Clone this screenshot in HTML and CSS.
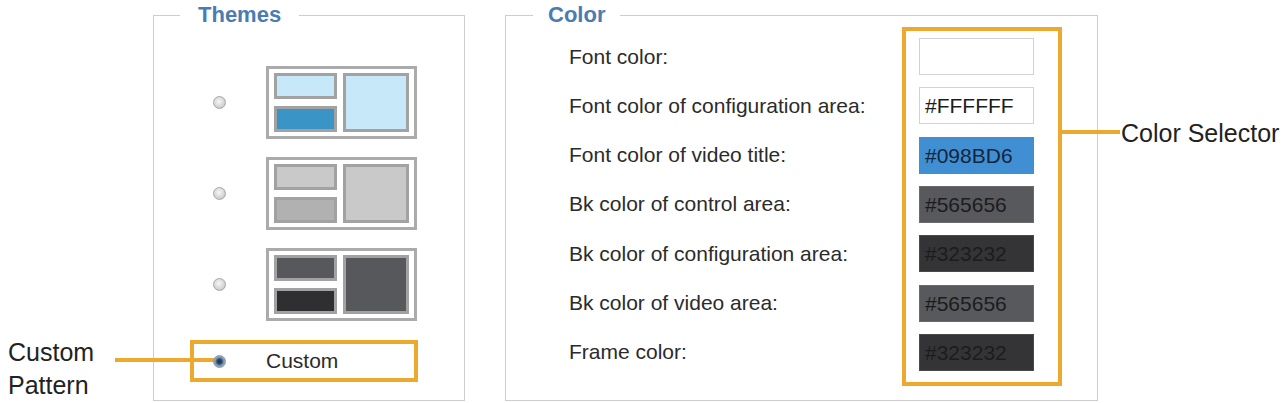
FILE: index.html
```html
<!DOCTYPE html>
<html lang="en">
<head>
    <meta charset="UTF-8">
    <meta name="viewport" content="width=device-width, initial-scale=1.0">
    <title>Themes and Color</title>
    <link rel="stylesheet" href="styles.css">
</head>
<body>
    <div class="page">
        <div class="callout callout-left">Custom<br>Pattern</div>

        <fieldset class="panel themes">
            <legend>Themes</legend>
            <ul class="theme-list">
                <li class="theme-row">
                    <span class="radio"></span>
                    <div class="thumb thumb-blue">
                        <div class="pane pane-a"></div>
                        <div class="pane pane-b"></div>
                        <div class="pane pane-c"></div>
                    </div>
                </li>
                <li class="theme-row">
                    <span class="radio"></span>
                    <div class="thumb thumb-gray">
                        <div class="pane pane-a"></div>
                        <div class="pane pane-b"></div>
                        <div class="pane pane-c"></div>
                    </div>
                </li>
                <li class="theme-row">
                    <span class="radio"></span>
                    <div class="thumb thumb-dark">
                        <div class="pane pane-a"></div>
                        <div class="pane pane-b"></div>
                        <div class="pane pane-c"></div>
                    </div>
                </li>
                <li class="theme-row custom">
                    <span class="radio checked"></span>
                    <span class="custom-label">Custom</span>
                </li>
            </ul>
        </fieldset>

        <fieldset class="panel colors">
            <legend>Color</legend>
            <div class="color-grid">
                <ul class="color-labels">
                    <li>Font color:</li>
                    <li>Font color of configuration area:</li>
                    <li>Font color of video title:</li>
                    <li>Bk color of control area:</li>
                    <li>Bk color of configuration area:</li>
                    <li>Bk color of video area:</li>
                    <li>Frame color:</li>
                </ul>
                <div class="selector">
                    <div class="swatch"></div>
                    <div class="swatch">#FFFFFF</div>
                    <div class="swatch swatch-blue">#098BD6</div>
                    <div class="swatch swatch-mid">#565656</div>
                    <div class="swatch swatch-dark">#323232</div>
                    <div class="swatch swatch-mid">#565656</div>
                    <div class="swatch swatch-dark">#323232</div>
                </div>
            </div>
        </fieldset>

        <div class="callout callout-right">Color Selector</div>
    </div>
</body>
</html>
```

FILE: styles.css
```css
body {
    margin: 0;
    background: #fff;
    font-family: "Liberation Sans", Arial, sans-serif;
    color: #2b2b2b;
}
.page {
    display: flex;
    align-items: flex-start;
    padding-top: 2px;
    width: 1287px;
    height: 403px;
    box-sizing: border-box;
}
ul {
    list-style: none;
    margin: 0;
    padding: 0;
}

/* annotations */
.callout {
    font-size: 25px;
    line-height: 33px;
    color: #222;
}
.callout-left {
    width: 153px;
    box-sizing: border-box;
    padding-left: 8px;
    align-self: flex-end;
    margin-bottom: 1px;
}
.callout-right {
    margin-left: 23px;
    margin-top: 115px;
    white-space: nowrap;
}

/* fieldsets */
.panel {
    margin: 0;
    padding: 0;
    border: 1px solid #cdcdcd;
    height: 399px;
    box-sizing: border-box;
}
.panel legend {
    font-size: 22px;
    line-height: 26px;
    font-weight: bold;
    color: #4a7cb2;
}
.themes {
    width: 312px;
}
.themes legend {
    margin-left: 26px;
    padding: 0 18px;
}
.colors {
    width: 593px;
    margin-left: 40px;
}
.colors legend {
    margin-left: 27px;
    padding: 0 15px;
}

/* theme choices */
.theme-list {
    margin: 34px 0 0 36px;
    display: flex;
    flex-direction: column;
    gap: 10px;
}
.theme-row {
    position: relative;
    display: flex;
    align-items: center;
    width: 228px;
    box-sizing: border-box;
    border: 4px solid transparent;
    padding-left: 19px;
}
.theme-row.custom {
    border-color: #eca92e;
    height: 42px;
    margin-top: 5px;
}
.theme-row.custom::before {
    content: "";
    position: absolute;
    left: -79px;
    top: 14px;
    width: 105px;
    height: 4px;
    background: #eca92e;
}
.radio {
    position: relative;
    z-index: 1;
    flex-shrink: 0;
    width: 11px;
    height: 11px;
    border: 1px solid #a8a8a8;
    border-radius: 50%;
    margin-right: 40px;
    background: radial-gradient(circle at 45% 40%, #f6f6f6 0, #dadada 50%, #b8b8b8 100%);
}
.radio.checked {
    border-color: #8a98a8;
    background: radial-gradient(circle, #1d3552 0, #2b4a6e 30%, #7f97b3 55%, #c9d2dc 100%);
}
.custom-label {
    font-size: 21px;
    color: #2b2b2b;
}

.thumb {
    flex-shrink: 0;
    display: grid;
    grid-template-columns: 63px 66px;
    grid-template-rows: 26px 26px;
    gap: 7px 6px;
    padding: 4px 5px;
    border: 3px solid #ababab;
    background: #fff;
}
.pane {
    border: 3px solid #a2a2a2;
    box-sizing: border-box;
}
.pane-c {
    grid-column: 2;
    grid-row: 1 / 3;
}
.thumb-blue .pane-a,
.thumb-blue .pane-c {
    background: #c7e8f9;
}
.thumb-blue .pane-b {
    background: #3a94c6;
}
.thumb-gray .pane-a,
.thumb-gray .pane-c {
    background: #c9c9c9;
}
.thumb-gray .pane-b {
    background: #b1b1b1;
}
.thumb-dark .pane-a,
.thumb-dark .pane-c {
    background: #57585b;
}
.thumb-dark .pane-b {
    background: #2f2f31;
}

/* color settings */
.color-grid {
    display: flex;
    align-items: flex-start;
}
.color-labels {
    width: 396px;
    box-sizing: border-box;
    padding-left: 63px;
    margin-top: 10px;
    display: flex;
    flex-direction: column;
    gap: 12.33px;
}
.color-labels li {
    height: 37px;
    display: flex;
    align-items: center;
    font-size: 21px;
    white-space: nowrap;
}
.selector {
    position: relative;
    margin-top: -1px;
    border: 4px solid #eca92e;
    padding: 7px 24px 11px 13px;
    display: flex;
    flex-direction: column;
    gap: 12.33px;
}
.selector::after {
    content: "";
    position: absolute;
    left: calc(100% + 4px);
    top: 99px;
    width: 58px;
    height: 4px;
    background: #eca92e;
}
.swatch {
    width: 115px;
    height: 37px;
    box-sizing: border-box;
    border: 1px solid #d2d2d2;
    padding-left: 5px;
    font-size: 21px;
    line-height: 35px;
    color: #1c1c1c;
    background: #fff;
}
.swatch-blue {
    background: #3f8fd2;
    border-color: #3f8fd2;
    color: #14253d;
}
.swatch-mid {
    background: #58595c;
    border-color: #6a6a6a;
}
.swatch-dark {
    background: #343436;
    border-color: #4a4a4a;
}
```
